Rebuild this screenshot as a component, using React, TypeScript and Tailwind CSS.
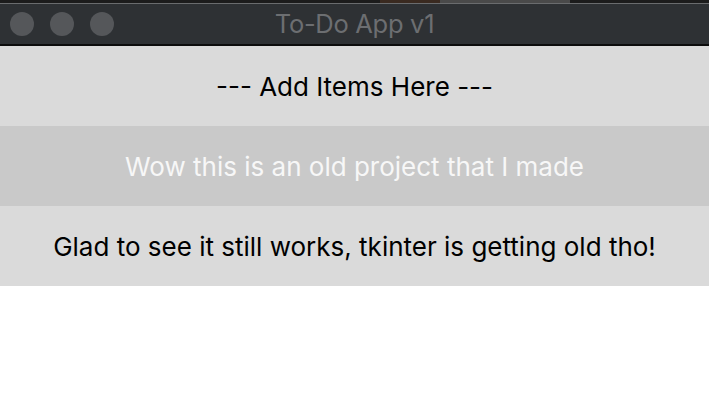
import React from "react";

export default function App() {
  const font = { fontFamily: "Inter, 'Noto Sans', 'Liberation Sans', sans-serif" };
  return (
    <div className="w-[709px] h-[402px] bg-white overflow-hidden" style={font}>
      <div className="h-[3px] bg-[#1c1c1c] flex">
        <div className="w-[380px]" />
        <div className="w-[60px] bg-[#3a2a20]" />
        <div className="w-[130px] bg-[#4a4a4a]" />
      </div>
      <div className="h-[1px] bg-[#6a6c6e]" />
      <div className="h-[40px] bg-[#2e3134] relative flex items-center justify-center">
        <div className="absolute left-[10px] top-[8px] flex gap-[16px]">
          <div className="w-[24px] h-[24px] rounded-full bg-[#55575a]" />
          <div className="w-[24px] h-[24px] rounded-full bg-[#55575a]" />
          <div className="w-[24px] h-[24px] rounded-full bg-[#55575a]" />
        </div>
        <span className="text-[25.5px] text-[#6c6e71] leading-none tracking-[-0.3px]">To-Do App v1</span>
      </div>
      <div className="h-[2px] bg-[#0c0c0c]" />
      <div className="h-[80px] bg-[#dadada] flex items-center justify-center text-[26px] text-black">
        --- Add Items Here ---
      </div>
      <div className="h-[80px] bg-[#c9c9c9] flex items-center justify-center text-[26px] text-[#f7f7f7]">
        Wow this is an old project that I made
      </div>
      <div className="h-[80px] bg-[#dadada] flex items-center justify-center text-[26px] text-black">
        Glad to see it still works, tkinter is getting old tho!
      </div>
    </div>
  );
}
